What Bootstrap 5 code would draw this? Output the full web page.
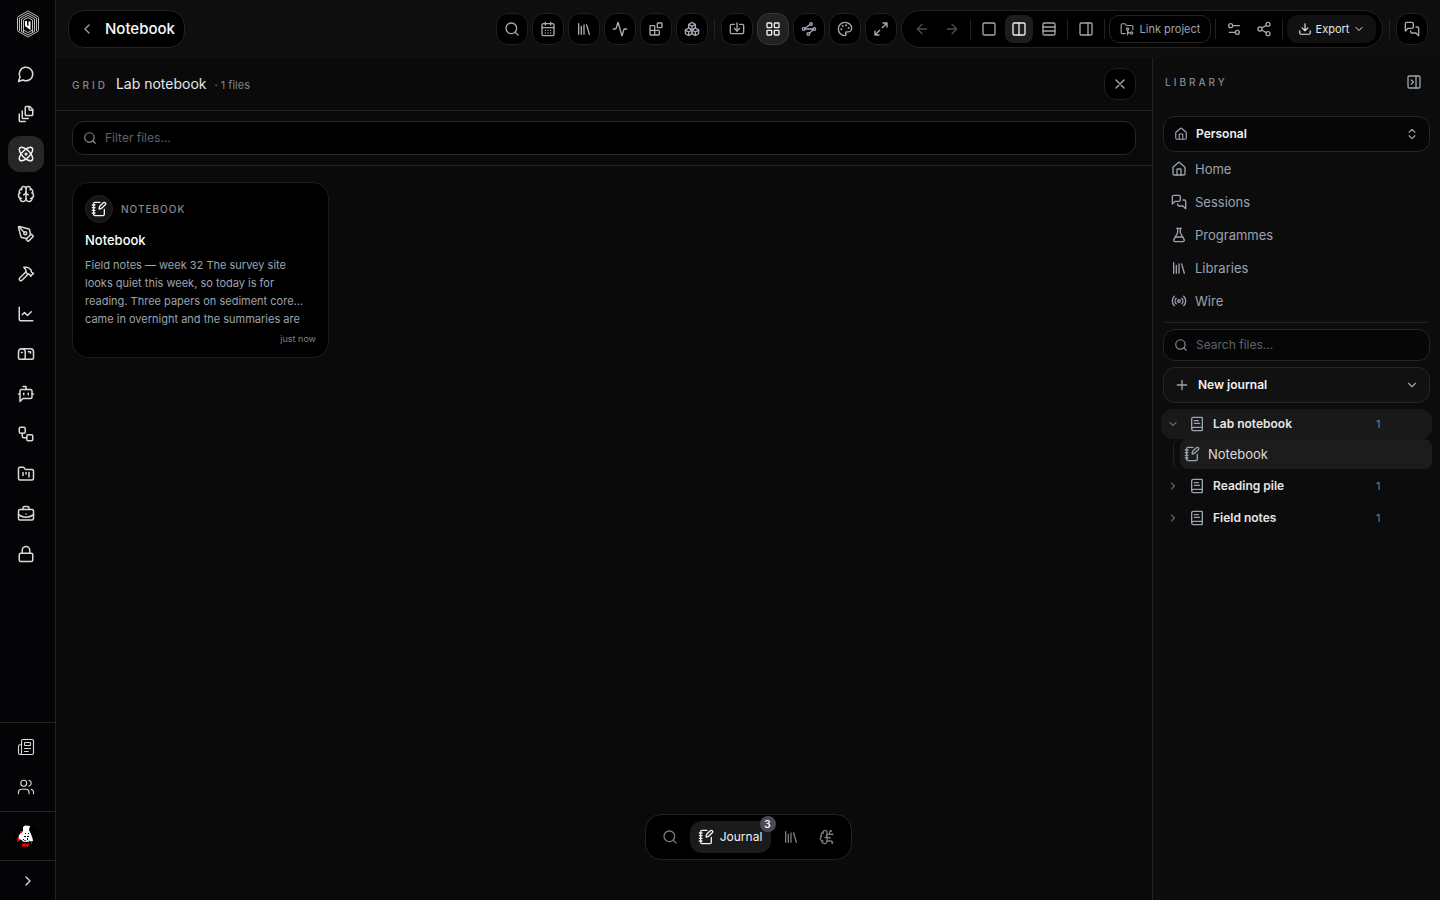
<!DOCTYPE html>
<html lang="en">
<head>
<meta charset="utf-8">
<meta name="viewport" content="width=device-width, initial-scale=1">
<title>Notebook</title>
<link href="https://cdn.jsdelivr.net/npm/bootstrap@5.3.0/dist/css/bootstrap.min.css" rel="stylesheet">
<style>
:root { --line:#232323; --muted:#9ca3af; --text:#e6e6e6; }
body { background:#0a0a0a; color:var(--text); font-family:Inter,"Liberation Sans",sans-serif; font-size:13px; line-height:20px; }
button, input { font-family:inherit; }
svg.ico { width:16px; height:16px; fill:none; stroke:currentColor; stroke-width:2; stroke-linecap:round; stroke-linejoin:round; flex:none; display:block; }
svg.ico-18 { width:18px; height:18px; }
svg.ico-14 { width:14px; height:14px; }
svg.ico-12 { width:12px; height:12px; }
svg.ico-thin { stroke-width:1.5; }
.plain { background:none; border:0; padding:0; color:inherit; display:flex; align-items:center; justify-content:center; text-decoration:none; }

/* left rail */
.rail { width:56px; background:#040406; border-right:1px solid var(--line); color:#d9d9db; }
.rail-brand { height:48px; padding:10px 0 0 16px; }
.rail-list { padding:8px 0 0 8px; gap:4px; }
.rail-btn { width:36px; height:36px; border-radius:12px; color:#d9d9db; }
.rail-btn.active { background:#272727; color:#f0f0f0; }
.rail-group { border-top:1px solid var(--line); padding:6px 0 6px 8px; gap:4px; }
.avatar { width:24px; height:24px; border-radius:50%; overflow:hidden; background:#000; }
.rail-foot { border-top:1px solid var(--line); }
.rail-toggle { height:39px; width:100%; }

/* top bar */
.topbar { height:58px; padding:10px 12px; background:#0e0e0e; gap:4px; }
.crumb { height:38px; padding:0 9px 0 10px; gap:10px; background:#000; border:1px solid var(--line); border-radius:16px; font-size:15px; font-weight:500; }
.crumb svg { color:#a0a0a0; }
.tool { width:32px; height:32px; border:1px solid #202020; border-radius:12px; background:#000; color:#a6abb5; }
.tool.active { background:#222; border-color:#38383c; color:#f0f0f0; }
.sep { width:1px; height:20px; background:#222; margin:0 2px; flex:none; }
.toolset { height:38px; padding:0 6px; gap:2px; background:#000; border:1px solid var(--line); border-radius:19px; color:#a6a6a6; }
.mini { width:28px; height:28px; border-radius:8px; color:inherit; }
.mini.faded { color:#4c4c4c; }
.mini.active { background:#1d1d1d; color:#f0f0f0; }
.chip { height:28px; border-radius:10px; padding:0 8px; gap:6px; font-size:11px; color:var(--muted); }
.chip-link { border:1px solid #262626; min-width:102px; }
.chip-export { background:#111; color:#e6e6e6; gap:4px; min-width:89px; }

/* workspace */
.caps { font-size:10px; letter-spacing:3px; color:#85888e; font-weight:500; }
.bar { padding:10px 16px; border-bottom:1px solid var(--line); }
.place-name { font-size:14px; }
.place-count { font-size:11px; color:#7d8590; margin-left:8px; }
.field { border:1px solid #262626; border-radius:12px; background:#000; padding:0 10px; gap:8px; color:#8a8d93; height:34px; }
.field-sm { height:32px; background:#060606; }
.field input { background:none; border:0; outline:0; padding:0; color:var(--text); font-size:12px; width:100%; }
.field input::placeholder { color:#5e636c; opacity:1; }
.tiles { display:grid; grid-template-columns:repeat(auto-fill,minmax(240px,1fr)); gap:12px; padding:16px; }
.tile { background:#000; border:1px solid #1c1c1c; border-radius:16px; padding:12px; text-align:left; color:var(--muted); }
.tile-icon { width:28px; height:28px; border-radius:50%; background:#141414; border:1px solid #242424; color:#f2f2f2; display:flex; align-items:center; justify-content:center; }
.tile-kind { font-size:10px; letter-spacing:1px; color:#85888e; font-weight:500; }
.tile-title { font-size:13px; font-weight:500; color:#fff; margin-top:8px; line-height:18px; }
.tile-text { font-size:11px; line-height:18px; margin-top:7px; white-space:nowrap; }
.tile-time { font-size:9px; line-height:12px; color:#7d8188; margin-top:5px; }

/* library */
.library { width:288px; background:#0c0c0c; border-left:1px solid var(--line); color:var(--muted); }
.lib-head { height:48px; padding:0 18px 0 12px; }
.lib-body { padding:10px; }
.lib-box { height:36px; border:1px solid #262626; border-radius:12px; padding:0 10px; gap:8px; color:#f0f0f0; font-size:12px; font-weight:600; background:#060606; width:100%; }
.lib-box svg { color:var(--muted); }
.lib-new { background:#111; margin:6px 0; }
.lib-link { height:33px; padding:0 8px; gap:8px; color:var(--muted); text-decoration:none; }
.lib-rule { height:1px; background:var(--line); margin:5px 2px 6px; }
.tree { margin:0 -2px; }
.tree-row { height:30px; border-radius:12px; padding:0 6px; font-size:12px; font-weight:600; color:#e6e6e6; width:100%; margin-top:2px; }
.tree-row svg { color:var(--muted); }
.tree-row.active { background:#191919; margin-top:0; }
.tree-book { margin:0 8px 0 10px; }
.tree-count { font-size:11px; color:#6b7f92; font-weight:400; width:50px; text-align:left; }
.tree-child { margin-left:12px; padding-left:6px; border-left:1px solid #222; border-radius:8px; }
.tree-child .tree-row { background:#1c1c1c; border-radius:8px; font-size:13px; font-weight:400; padding:0 4px; margin-top:0; color:#dcdcdc; }

/* floating dock, centred over the workspace and library */
.dock-wrap { position:absolute; left:0; right:0; bottom:40px; pointer-events:none; }
.dock { height:46px; padding:0 6px; background:#000; border:1px solid var(--line); border-radius:16px; color:#7c7c7c; pointer-events:auto; }
.dock-btn { width:36px; height:32px; }
.dock-btn.active { position:relative; width:auto; min-width:81px; padding:0 8px; gap:6px; margin:0 2px; background:#1b1b1b; border-radius:12px; color:#f0f0f0; font-size:12px; }
.count { position:absolute; top:-5px; right:-5px; min-width:16px; height:16px; line-height:16px; border-radius:8px; background:#4a4a54; color:#fff; font-size:10px; font-weight:600; text-align:center; }
</style>
</head>
<body>
<svg class="d-none" aria-hidden="true">
  <symbol id="chat" viewBox="0 0 24 24"><path d="M7.9 20A9 9 0 1 0 4 16.1L2 22Z"/></symbol>
  <symbol id="filestack" viewBox="0 0 24 24"><path d="M21 7h-3a2 2 0 0 1-2-2V2"/><path d="M21 6v6.5c0 .8-.7 1.5-1.5 1.5h-7c-.8 0-1.5-.7-1.5-1.5v-9c0-.8.7-1.5 1.5-1.5H17Z"/><path d="M7 8v8.8c0 .3.2.6.4.8.2.2.5.4.8.4H15"/><path d="M3 12v8.8c0 .3.2.6.4.8.2.2.5.4.8.4H11"/></symbol>
  <symbol id="atom" viewBox="0 0 24 24"><circle cx="12" cy="12" r="1"/><path d="M20.2 20.2c2.04-2.03.02-7.36-4.5-11.9-4.54-4.52-9.87-6.54-11.9-4.5-2.04 2.03-.02 7.36 4.5 11.9 4.54 4.52 9.87 6.54 11.9 4.5Z"/><path d="M15.7 15.7c4.52-4.54 6.54-9.87 4.5-11.9-2.03-2.04-7.36-.02-11.9 4.5-4.52 4.54-6.54 9.87-4.5 11.9 2.03 2.04 7.36.02 11.9-4.5Z"/></symbol>
  <symbol id="brain" viewBox="0 0 24 24"><path d="M12 18V5"/><path d="M15 13a4.17 4.17 0 0 1-3-4 4.17 4.17 0 0 1-3 4"/><path d="M17.598 6.5A3 3 0 1 0 12 5a3 3 0 1 0-5.598 1.5"/><path d="M17.997 5.125a4 4 0 0 1 2.526 5.77"/><path d="M18 18a4 4 0 0 0 2-7.464"/><path d="M19.967 17.483A4 4 0 1 1 12 18a4 4 0 1 1-7.967-.517"/><path d="M6 18a4 4 0 0 1-2-7.464"/><path d="M6.003 5.125a4 4 0 0 0-2.526 5.77"/></symbol>
  <symbol id="pentool" viewBox="0 0 24 24"><path d="M15.707 21.293a1 1 0 0 1-1.414 0l-1.586-1.586a1 1 0 0 1 0-1.414l5.586-5.586a1 1 0 0 1 1.414 0l1.586 1.586a1 1 0 0 1 0 1.414z"/><path d="m18 13-1.375-6.874a1 1 0 0 0-.746-.776L3.235 2.028a1 1 0 0 0-1.207 1.207L5.35 15.879a1 1 0 0 0 .776.746L13 18"/><path d="m2.3 2.3 7.286 7.286"/><circle cx="11" cy="11" r="2"/></symbol>
  <symbol id="hammer" viewBox="0 0 24 24"><path d="m15 12-8.373 8.373a1 1 0 1 1-3-3L12 9"/><path d="m18 15 4-4"/><path d="m21.5 11.5-1.914-1.914A2 2 0 0 1 19 8.172V7l-2.26-2.26a6 6 0 0 0-4.202-1.756L9 2.96l.92.82A6.18 6.18 0 0 1 12 8.4V10l2 2h1.172a2 2 0 0 1 1.414.586L18.5 14.5"/></symbol>
  <symbol id="chart" viewBox="0 0 24 24"><path d="M3 3v16a2 2 0 0 0 2 2h16"/><path d="m19 9-5 5-4-4-3 3"/></symbol>
  <symbol id="mailbox" viewBox="0 0 24 24"><path d="M22 17a2 2 0 0 1-2 2H4a2 2 0 0 1-2-2V9.5C2 7 4 5 6.5 5H18c2.2 0 4 1.8 4 4v8Z"/><path d="M15 9h3v2"/><path d="M6.5 5C9 5 11 7 11 9.5V17a2 2 0 0 1-2 2"/><path d="M6 10h1"/></symbol>
  <symbol id="bot" viewBox="0 0 24 24"><path d="M12 6V2H8"/><path d="m8 18-4 4V8a2 2 0 0 1 2-2h12a2 2 0 0 1 2 2v8a2 2 0 0 1-2 2Z"/><path d="M2 12h2M9 11v2M15 11v2M20 12h2"/></symbol>
  <symbol id="workflow" viewBox="0 0 24 24"><rect x="3" y="3" width="8" height="8" rx="2"/><path d="M7 11v4a2 2 0 0 0 2 2h4"/><rect x="13" y="13" width="8" height="8" rx="2"/></symbol>
  <symbol id="kanban" viewBox="0 0 24 24"><path d="M4 20h16a2 2 0 0 0 2-2V8a2 2 0 0 0-2-2h-7.93a2 2 0 0 1-1.66-.9l-.82-1.2A2 2 0 0 0 7.93 3H4a2 2 0 0 0-2 2v13c0 1.1.9 2 2 2Z"/><path d="M8 10v4M12 10v2M16 10v6"/></symbol>
  <symbol id="briefcase" viewBox="0 0 24 24"><path d="M12 12h.01"/><path d="M16 6V4a2 2 0 0 0-2-2h-4a2 2 0 0 0-2 2v2"/><path d="M22 13a18.15 18.15 0 0 1-20 0"/><rect x="2" y="6" width="20" height="14" rx="2"/></symbol>
  <symbol id="lock" viewBox="0 0 24 24"><rect x="3" y="11" width="18" height="11" rx="2"/><path d="M7 11V7a5 5 0 0 1 10 0v4"/></symbol>
  <symbol id="news" viewBox="0 0 24 24"><path d="M15 18h-5M18 14h-8"/><path d="M4 22h16a2 2 0 0 0 2-2V4a2 2 0 0 0-2-2H8a2 2 0 0 0-2 2v16a2 2 0 0 1-4 0v-9a2 2 0 0 1 2-2h2"/><rect x="10" y="6" width="8" height="4" rx="1"/></symbol>
  <symbol id="users" viewBox="0 0 24 24"><path d="M16 21v-2a4 4 0 0 0-4-4H6a4 4 0 0 0-4 4v2"/><circle cx="9" cy="7" r="4"/><path d="M22 21v-2a4 4 0 0 0-3-3.87"/><path d="M16 3.13a4 4 0 0 1 0 7.75"/></symbol>
  <symbol id="right" viewBox="0 0 24 24"><path d="m9 18 6-6-6-6"/></symbol>
  <symbol id="left" viewBox="0 0 24 24"><path d="m15 18-6-6 6-6"/></symbol>
  <symbol id="down" viewBox="0 0 24 24"><path d="m6 9 6 6 6-6"/></symbol>
  <symbol id="updown" viewBox="0 0 24 24"><path d="m7 15 5 5 5-5M7 9l5-5 5 5"/></symbol>
  <symbol id="search" viewBox="0 0 24 24"><circle cx="11" cy="11" r="8"/><path d="m21 21-4.3-4.3"/></symbol>
  <symbol id="calendar" viewBox="0 0 24 24"><path d="M8 2v4M16 2v4"/><rect x="3" y="4" width="18" height="18" rx="2"/><path d="M3 10h18M8 14h.01M12 14h.01M16 14h.01M8 18h.01M12 18h.01M16 18h.01"/></symbol>
  <symbol id="library" viewBox="0 0 24 24"><path d="m16 6 4 14M12 6v14M8 8v12M4 4v16"/></symbol>
  <symbol id="activity" viewBox="0 0 24 24"><path d="M22 12h-2.48a2 2 0 0 0-1.93 1.46l-2.35 8.36a.25.25 0 0 1-.48 0L9.24 2.18a.25.25 0 0 0-.48 0l-2.35 8.36A2 2 0 0 1 4.49 12H2"/></symbol>
  <symbol id="blocks" viewBox="0 0 24 24"><rect x="14" y="3" width="7" height="7" rx="1"/><path d="M10 21V8a1 1 0 0 0-1-1H4a1 1 0 0 0-1 1v12a1 1 0 0 0 1 1h12a1 1 0 0 0 1-1v-5a1 1 0 0 0-1-1H3"/></symbol>
  <symbol id="boxes" viewBox="0 0 24 24"><path d="M2.97 12.92A2 2 0 0 0 2 14.63v3.24a2 2 0 0 0 .97 1.71l3 1.8a2 2 0 0 0 2.06 0L12 19v-5.5l-5-3-4.03 2.42Z"/><path d="m7 16.5-4.74-2.85M7 16.5l5-3M7 16.5v5.17"/><path d="M12 13.5V19l3.97 2.38a2 2 0 0 0 2.06 0l3-1.8a2 2 0 0 0 .97-1.71v-3.24a2 2 0 0 0-.97-1.71L17 10.5l-5 3Z"/><path d="m17 16.5-5-3M17 16.5l4.74-2.85M17 16.5v5.17"/><path d="M7.97 4.42A2 2 0 0 0 7 6.13v4.37l5 3 5-3V6.13a2 2 0 0 0-.97-1.71l-3-1.8a2 2 0 0 0-2.06 0l-3 1.8Z"/><path d="M12 8 7.26 5.15M12 8l4.74-2.85M12 13.5V8"/></symbol>
  <symbol id="import" viewBox="0 0 24 24"><path d="M12 3v12"/><path d="m8 11 4 4 4-4"/><path d="M8 5H4a2 2 0 0 0-2 2v10a2 2 0 0 0 2 2h16a2 2 0 0 0 2-2V7a2 2 0 0 0-2-2h-4"/></symbol>
  <symbol id="grid" viewBox="0 0 24 24"><rect x="3" y="3" width="7" height="7" rx="1"/><rect x="14" y="3" width="7" height="7" rx="1"/><rect x="14" y="14" width="7" height="7" rx="1"/><rect x="3" y="14" width="7" height="7" rx="1"/></symbol>
  <symbol id="waypoints" viewBox="0 0 24 24"><circle cx="15" cy="4.500" r="2"/><circle cx="4" cy="12" r="2"/><circle cx="20" cy="12" r="2"/><circle cx="11" cy="19.500" r="2"/><path d="M13.300 5.700 5.600 10.800M6 12h12M18.400 13.200l-5.800 5.100"/></symbol>
  <symbol id="palette" viewBox="0 0 24 24"><g fill="currentColor"><circle cx="13.5" cy="6.5" r=".5"/><circle cx="17.5" cy="10.5" r=".5"/><circle cx="8.5" cy="7.5" r=".5"/><circle cx="6.5" cy="12.5" r=".5"/></g><path d="M12 2C6.5 2 2 6.5 2 12s4.5 10 10 10c.926 0 1.648-.746 1.648-1.688 0-.437-.18-.835-.437-1.125-.29-.289-.438-.652-.438-1.125a1.64 1.64 0 0 1 1.668-1.668h1.996c3.051 0 5.555-2.503 5.555-5.554C21.965 6.012 17.461 2 12 2z"/></symbol>
  <symbol id="expand" viewBox="0 0 24 24"><path d="M15 3h6v6M21 3l-7 7M3 21l7-7M9 21H3v-6"/></symbol>
  <symbol id="back" viewBox="0 0 24 24"><path d="m12 19-7-7 7-7M19 12H5"/></symbol>
  <symbol id="forward" viewBox="0 0 24 24"><path d="m12 5 7 7-7 7M5 12h14"/></symbol>
  <symbol id="square" viewBox="0 0 24 24"><rect x="3" y="3" width="18" height="18" rx="2"/></symbol>
  <symbol id="columns" viewBox="0 0 24 24"><rect x="3" y="3" width="18" height="18" rx="2"/><path d="M12 3v18"/></symbol>
  <symbol id="rows" viewBox="0 0 24 24"><rect x="3" y="3" width="18" height="18" rx="2"/><path d="M21 9H3M21 15H3"/></symbol>
  <symbol id="panel" viewBox="0 0 24 24"><rect x="3" y="3" width="18" height="18" rx="2"/><path d="M15 3v18"/></symbol>
  <symbol id="panelclose" viewBox="0 0 24 24"><rect x="3" y="3" width="18" height="18" rx="2"/><path d="M15 3v18M8 9l3 3-3 3"/></symbol>
  <symbol id="foldergit" viewBox="0 0 24 24"><path d="M18 19a5 5 0 0 1-5-5v8"/><path d="M9 20H4a2 2 0 0 1-2-2V5a2 2 0 0 1 2-2h3.9a2 2 0 0 1 1.69.9l.81 1.2a2 2 0 0 0 1.67.9H20a2 2 0 0 1 2 2v5"/><circle cx="13" cy="12" r="2"/><circle cx="20" cy="19" r="2"/></symbol>
  <symbol id="settings" viewBox="0 0 24 24"><path d="M20 7h-9M14 17H5"/><circle cx="17" cy="17" r="3"/><circle cx="7" cy="7" r="3"/></symbol>
  <symbol id="share" viewBox="0 0 24 24"><circle cx="18" cy="5" r="3"/><circle cx="6" cy="12" r="3"/><circle cx="18" cy="19" r="3"/><path d="m8.59 13.51 6.83 3.98M15.41 6.51l-6.82 3.98"/></symbol>
  <symbol id="download" viewBox="0 0 24 24"><path d="M12 15V3M21 15v4a2 2 0 0 1-2 2H5a2 2 0 0 1-2-2v-4M7 10l5 5 5-5"/></symbol>
  <symbol id="messages" viewBox="0 0 24 24"><path d="M14 9a2 2 0 0 1-2 2H6l-4 4V4a2 2 0 0 1 2-2h8a2 2 0 0 1 2 2z"/><path d="M18 9h2a2 2 0 0 1 2 2v11l-4-4h-6a2 2 0 0 1-2-2v-1"/></symbol>
  <symbol id="notebook" viewBox="0 0 24 24"><path d="M13.4 2H6a2 2 0 0 0-2 2v16a2 2 0 0 0 2 2h12a2 2 0 0 0 2-2v-7.4"/><path d="M2 6h4M2 10h4M2 14h4M2 18h4"/><path d="M21.378 5.626a1 1 0 1 0-3.004-3.004l-5.01 5.012a2 2 0 0 0-.506.854l-.837 2.87a.5.5 0 0 0 .62.62l2.87-.837a2 2 0 0 0 .854-.506z"/></symbol>
  <symbol id="close" viewBox="0 0 24 24"><path d="M18 6 6 18M6 6l12 12"/></symbol>
  <symbol id="house" viewBox="0 0 24 24"><path d="M15 21v-8a1 1 0 0 0-1-1h-4a1 1 0 0 0-1 1v8"/><path d="M3 10a2 2 0 0 1 .709-1.528l7-5.999a2 2 0 0 1 2.582 0l7 5.999A2 2 0 0 1 21 10v9a2 2 0 0 1-2 2H5a2 2 0 0 1-2-2z"/></symbol>
  <symbol id="flask" viewBox="0 0 24 24"><path d="M14 2v6a2 2 0 0 0 .245.96l5.51 10.08A2 2 0 0 1 18 22H6a2 2 0 0 1-1.755-2.96l5.51-10.08A2 2 0 0 0 10 8V2"/><path d="M6.453 15h11.094M8.5 2h7"/></symbol>
  <symbol id="radio" viewBox="0 0 24 24"><path d="M4.9 19.1C1 15.2 1 8.8 4.9 4.9"/><path d="M7.8 16.2c-2.3-2.3-2.3-6.1 0-8.5"/><circle cx="12" cy="12" r="2"/><path d="M16.2 7.8c2.3 2.3 2.3 6.1 0 8.5"/><path d="M19.1 4.9C23 8.8 23 15.1 19.1 19"/></symbol>
  <symbol id="plus" viewBox="0 0 24 24"><path d="M5 12h14M12 5v14"/></symbol>
  <symbol id="book" viewBox="0 0 24 24"><path d="M4 19.5v-15A2.5 2.5 0 0 1 6.5 2H19a1 1 0 0 1 1 1v18a1 1 0 0 1-1 1H6.5a1 1 0 0 1 0-5H20"/><path d="M8 11h8M8 7h6"/></symbol>
  <symbol id="circuit" viewBox="0 0 24 24"><path d="M12 5a3 3 0 1 0-5.997.125 4 4 0 0 0-2.526 5.77 4 4 0 0 0 .556 6.588A4 4 0 1 0 12 18Z"/><path d="M9 13a4.5 4.5 0 0 0 3-4M6.003 5.125A3 3 0 0 0 6.401 6.5M3.477 10.896a4 4 0 0 1 .585-.396M6 18a4 4 0 0 1-1.967-.516M12 13h4M12 18h6a2 2 0 0 1 2 2v1M12 8h8M16 8V5a2 2 0 0 1 2-2"/><circle cx="16" cy="13" r=".5"/><circle cx="18" cy="3" r=".5"/><circle cx="20" cy="21" r=".5"/><circle cx="20" cy="8" r=".5"/></symbol>
</svg>

<div class="d-flex min-vh-100">
  <nav class="rail d-flex flex-column flex-shrink-0" aria-label="Main">
    <a class="rail-brand d-block" href="#" aria-label="Start">
      <svg class="d-block" width="24" height="28" viewBox="0 0 24 28" fill="none" stroke="#bdbdbd" stroke-width="1"><path d="M1.500 7.500v13M3.500 8v13M5.500 9v12.500M7.500 10v12M16.500 10v12M18.500 9v12.500M20.500 8v13M22.500 7.500v13"/><path d="M1.500 7 12 1l10.500 6M3.500 8 12 3.200 20.500 8M5.500 9 12 5.400 18.500 9M7.500 10 12 7.600l4.500 2.400M1.500 21 12 27l10.500-6M5.500 21.500l6.500 3.400 6.500-3.400M7.500 20l4.500 2.600 4.500-2.600"/><path d="M10 11v4.500l3.500 2.500v-6.500" stroke="#fff" stroke-width="2"/></svg>
    </a>
    <div class="rail-list d-flex flex-column">
      <button class="plain rail-btn" aria-label="Chat"><svg class="ico ico-18"><use href="#chat"/></svg></button>
      <button class="plain rail-btn" aria-label="Files"><svg class="ico ico-18"><use href="#filestack"/></svg></button>
      <button class="plain rail-btn active" aria-label="Research"><svg class="ico ico-18"><use href="#atom"/></svg></button>
      <button class="plain rail-btn" aria-label="Memory"><svg class="ico ico-18"><use href="#brain"/></svg></button>
      <button class="plain rail-btn" aria-label="Design"><svg class="ico ico-18"><use href="#pentool"/></svg></button>
      <button class="plain rail-btn" aria-label="Build"><svg class="ico ico-18"><use href="#hammer"/></svg></button>
      <button class="plain rail-btn" aria-label="Charts"><svg class="ico ico-18"><use href="#chart"/></svg></button>
      <button class="plain rail-btn" aria-label="Mail"><svg class="ico ico-18"><use href="#mailbox"/></svg></button>
      <button class="plain rail-btn" aria-label="Agents"><svg class="ico ico-18"><use href="#bot"/></svg></button>
      <button class="plain rail-btn" aria-label="Workflows"><svg class="ico ico-18"><use href="#workflow"/></svg></button>
      <button class="plain rail-btn" aria-label="Projects"><svg class="ico ico-18"><use href="#kanban"/></svg></button>
      <button class="plain rail-btn" aria-label="Work"><svg class="ico ico-18"><use href="#briefcase"/></svg></button>
      <button class="plain rail-btn" aria-label="Vault"><svg class="ico ico-18"><use href="#lock"/></svg></button>
    </div>
    <div class="rail-group d-flex flex-column mt-auto">
      <button class="plain rail-btn" aria-label="News"><svg class="ico ico-18 ico-thin"><use href="#news"/></svg></button>
      <button class="plain rail-btn" aria-label="People"><svg class="ico ico-18 ico-thin"><use href="#users"/></svg></button>
    </div>
    <div class="rail-group">
      <button class="plain rail-btn" aria-label="Account"><span class="avatar"><svg class="d-block" width="24" height="24" viewBox="0 0 24 24"><path fill="#fff" d="M9 3l2-1.500 5 .5-1 4 1.500 3 2 5 .5 3-3 .5-1-1-2 1-2-1.500-2 1.500-2-2-3 .5 1-5 4-4Z"/><path fill="#e00" d="M6 7h2v2H6ZM3 14h2l1 3-3 1ZM8 19l2 1 1-1 1 1 2-1 1 1-1 3h-1l-1-1-1 2-1-2-2 1ZM17 17h1v3h-1Z"/><path fill="#000" d="M11 9h1v1h-1ZM14 9h1v1h-1ZM10 12h2v1h-2ZM13 12h2v1h-2ZM9 15h1v1H9ZM13 14h1v2h-1Z"/><path fill="#ccc" d="M9 17h6v1H9Z"/></svg></span></button>
    </div>
    <div class="rail-foot">
      <button class="plain rail-toggle" aria-label="Expand sidebar"><svg class="ico"><use href="#right"/></svg></button>
    </div>
  </nav>

  <div class="d-flex flex-column flex-grow-1 position-relative">
    <header class="topbar d-flex align-items-center">
      <button class="crumb d-flex align-items-center me-auto text-light"><svg class="ico"><use href="#left"/></svg>Notebook</button>
      <button class="plain tool" aria-label="Search"><svg class="ico"><use href="#search"/></svg></button>
      <button class="plain tool" aria-label="Calendar"><svg class="ico"><use href="#calendar"/></svg></button>
      <button class="plain tool" aria-label="Library"><svg class="ico"><use href="#library"/></svg></button>
      <button class="plain tool" aria-label="Activity"><svg class="ico"><use href="#activity"/></svg></button>
      <button class="plain tool" aria-label="Blocks"><svg class="ico"><use href="#blocks"/></svg></button>
      <button class="plain tool" aria-label="Boxes"><svg class="ico"><use href="#boxes"/></svg></button>
      <span class="sep"></span>
      <button class="plain tool" aria-label="Import"><svg class="ico"><use href="#import"/></svg></button>
      <button class="plain tool active" aria-label="Grid"><svg class="ico"><use href="#grid"/></svg></button>
      <button class="plain tool" aria-label="Graph"><svg class="ico"><use href="#waypoints"/></svg></button>
      <button class="plain tool" aria-label="Theme"><svg class="ico"><use href="#palette"/></svg></button>
      <button class="plain tool" aria-label="Full screen"><svg class="ico"><use href="#expand"/></svg></button>
      <div class="toolset d-flex align-items-center">
        <button class="plain mini faded" aria-label="Back"><svg class="ico"><use href="#back"/></svg></button>
        <button class="plain mini faded" aria-label="Forward"><svg class="ico"><use href="#forward"/></svg></button>
        <span class="sep"></span>
        <button class="plain mini" aria-label="Single"><svg class="ico"><use href="#square"/></svg></button>
        <button class="plain mini active" aria-label="Columns"><svg class="ico"><use href="#columns"/></svg></button>
        <button class="plain mini" aria-label="Rows"><svg class="ico"><use href="#rows"/></svg></button>
        <span class="sep"></span>
        <button class="plain mini" aria-label="Side panel"><svg class="ico"><use href="#panel"/></svg></button>
        <span class="sep"></span>
        <button class="plain chip chip-link"><svg class="ico ico-14"><use href="#foldergit"/></svg>Link project</button>
        <span class="sep"></span>
        <button class="plain mini" aria-label="Settings"><svg class="ico"><use href="#settings"/></svg></button>
        <button class="plain mini" aria-label="Share"><svg class="ico"><use href="#share"/></svg></button>
        <span class="sep"></span>
        <button class="plain chip chip-export"><svg class="ico ico-14"><use href="#download"/></svg>Export<svg class="ico ico-12"><use href="#down"/></svg></button>
      </div>
      <span class="sep"></span>
      <button class="plain tool" aria-label="Messages"><svg class="ico"><use href="#messages"/></svg></button>
    </header>

    <div class="d-flex flex-grow-1">
      <main class="flex-grow-1">
        <div class="bar d-flex align-items-center justify-content-between">
          <div class="d-flex align-items-baseline">
            <span class="caps me-2">GRID</span><span class="place-name">Lab notebook</span><span class="place-count">· 1 files</span>
          </div>
          <button class="plain tool" aria-label="Close"><svg class="ico"><use href="#close"/></svg></button>
        </div>
        <div class="bar">
          <label class="field d-flex align-items-center"><svg class="ico ico-14"><use href="#search"/></svg><input type="text" placeholder="Filter files..." aria-label="Filter files"></label>
        </div>
        <div class="tiles">
          <button class="tile">
            <span class="d-flex align-items-center gap-2"><span class="tile-icon"><svg class="ico"><use href="#notebook"/></svg></span><span class="tile-kind">NOTEBOOK</span></span>
            <span class="tile-title d-block">Notebook</span>
            <span class="tile-text d-block">Field notes — week 32 The survey site<br>looks quiet this week, so today is for<br>reading. Three papers on sediment core…<br>came in overnight and the summaries are</span>
            <span class="tile-time d-block text-end">just now</span>
          </button>
        </div>
      </main>

      <aside class="library flex-shrink-0">
        <div class="lib-head d-flex align-items-center justify-content-between">
          <span class="caps">LIBRARY</span>
          <button class="plain" aria-label="Collapse library"><svg class="ico"><use href="#panelclose"/></svg></button>
        </div>
        <div class="lib-body">
          <button class="lib-box d-flex align-items-center"><svg class="ico ico-14"><use href="#house"/></svg>Personal<svg class="ico ico-14 ms-auto"><use href="#updown"/></svg></button>
          <nav aria-label="Library">
            <a class="lib-link d-flex align-items-center" href="#"><svg class="ico"><use href="#house"/></svg>Home</a>
            <a class="lib-link d-flex align-items-center" href="#"><svg class="ico"><use href="#messages"/></svg>Sessions</a>
            <a class="lib-link d-flex align-items-center" href="#"><svg class="ico"><use href="#flask"/></svg>Programmes</a>
            <a class="lib-link d-flex align-items-center" href="#"><svg class="ico"><use href="#library"/></svg>Libraries</a>
            <a class="lib-link d-flex align-items-center" href="#"><svg class="ico"><use href="#radio"/></svg>Wire</a>
          </nav>
          <div class="lib-rule"></div>
          <label class="field field-sm d-flex align-items-center"><svg class="ico ico-14"><use href="#search"/></svg><input type="text" placeholder="Search files..." aria-label="Search files"></label>
          <button class="lib-box lib-new d-flex align-items-center"><svg class="ico"><use href="#plus"/></svg>New journal<svg class="ico ico-14 ms-auto"><use href="#down"/></svg></button>
          <div class="tree d-flex flex-column">
            <button class="plain tree-row active"><svg class="ico ico-12"><use href="#down"/></svg><svg class="ico tree-book"><use href="#book"/></svg>Lab notebook<span class="tree-count ms-auto">1</span></button>
            <div class="tree-child"><button class="plain tree-row justify-content-start"><svg class="ico me-2"><use href="#notebook"/></svg>Notebook</button></div>
            <button class="plain tree-row"><svg class="ico ico-12"><use href="#right"/></svg><svg class="ico tree-book"><use href="#book"/></svg>Reading pile<span class="tree-count ms-auto">1</span></button>
            <button class="plain tree-row"><svg class="ico ico-12"><use href="#right"/></svg><svg class="ico tree-book"><use href="#book"/></svg>Field notes<span class="tree-count ms-auto">1</span></button>
          </div>
        </div>
      </aside>
    </div>

    <div class="dock-wrap d-flex justify-content-center">
      <div class="dock d-flex align-items-center">
        <button class="plain dock-btn" aria-label="Search"><svg class="ico"><use href="#search"/></svg></button>
        <button class="plain dock-btn active"><svg class="ico"><use href="#notebook"/></svg>Journal<span class="count">3</span></button>
        <button class="plain dock-btn" aria-label="Library"><svg class="ico"><use href="#library"/></svg></button>
        <button class="plain dock-btn" aria-label="Insights"><svg class="ico"><use href="#circuit"/></svg></button>
      </div>
    </div>
  </div>
</div>
<script src="https://cdn.jsdelivr.net/npm/bootstrap@5.3.0/dist/js/bootstrap.bundle.min.js"></script>
</body>
</html>
